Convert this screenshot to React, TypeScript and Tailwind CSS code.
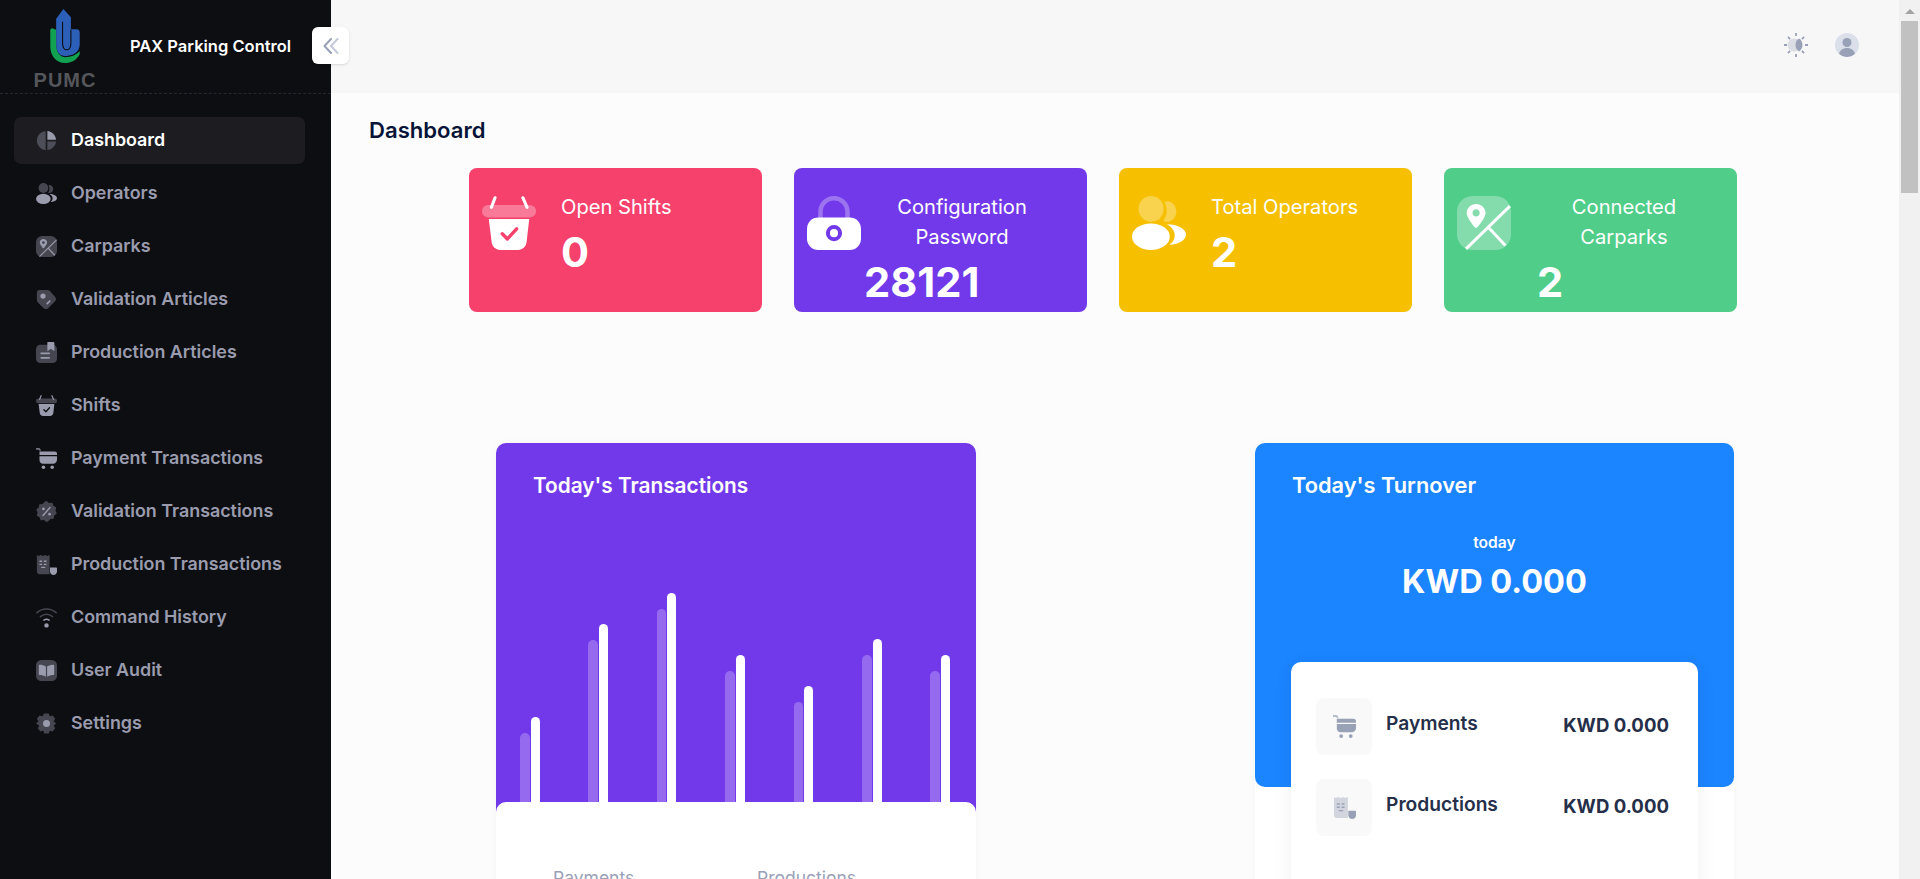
import type { ReactNode } from 'react';

type IconProps = { className?: string; duo?: number; cut?: string };

// duotone icons: currentColor for the main part, faded currentColor for the rest
const Svg = ({ className, children }: { className?: string; children: ReactNode }) => (
  <svg viewBox="0 0 24 24" fill="currentColor" className={className}>
    {children}
  </svg>
);

const PieIcon = ({ className, duo = 0.4 }: IconProps) => (
  <Svg className={className}>
    <path opacity={duo} d="M11 1.500C5.400 1.800 1 6.400 1 12c0 5.700 4.400 10.500 10 11V1.500z" />
    <path d="M13 1.200C18.300 1.700 22.400 5.800 22.900 11H13V1.200z" />
    <path opacity={duo} d="M13 13h9.900c-.5 5.100-4.700 9.300-9.900 9.900V13z" />
  </Svg>
);

const UsersIcon = ({ className, duo = 0.4 }: IconProps) => (
  <Svg className={className}>
    <ellipse opacity={duo} cx="8.500" cy="5.700" rx="5.600" ry="5.700" />
    <path opacity={duo} d="M15.500 2.300c2.300 0 4.200 2.100 4.200 4.600s-1.900 4.600-4.200 4.600c-.6 0-1.100-.1-1.600-.4 1-1.400 1.500-3 1.500-4.500 0-1.500-.4-2.900-1.100-4 .6-.2 1.300-.3 2.200-.3z" />
    <ellipse cx="8.400" cy="18.100" rx="8.400" ry="5.900" />
    <path d="M15.500 12.500c4.600 0 8.500 1.900 8.500 4.600 0 2.400-3 4.400-7.300 4.600 1.500-1.200 2.300-2.700 2.300-4.300 0-1.900-1.300-3.700-3.500-4.900z" />
  </Svg>
);

const MapIcon = ({ className, duo = 0.4 }: IconProps) => (
  <Svg className={className}>
    <rect opacity={duo} width="24" height="24" rx="7" />
    <path d="M8.500 3.500C6.300 3.500 4.300 5.200 4.300 7.500c0 1.700 2.700 5.400 3.600 6.400.3.300.9.300 1.100 0C10 12.900 12.700 9.200 12.700 7.500 12.700 5.200 10.700 3.500 8.500 3.500zm0 5.600c-.9 0-1.600-.7-1.600-1.600s.7-1.600 1.600-1.600 1.600.7 1.600 1.600-.7 1.600-1.600 1.600z" />
    <path stroke="currentColor" strokeWidth="1.300" fill="none" d="M23.500 4.500 4 23.500M14 14l7.500 8" />
  </Svg>
);

const TagIcon = ({ className, duo = 0.4 }: IconProps) => (
  <Svg className={className}>
    <path opacity={duo} d="M4 1h9c1 0 1.900.4 2.600 1.100l6.300 7c1.300 1.400 1.300 3.600-.1 5l-7.900 7.800c-1.400 1.400-3.700 1.400-5.100 0l-6.900-6.700C1.400 14.500 1 13.600 1 12.600V4c0-1.700 1.300-3 3-3z" />
    <circle cx="8" cy="8" r="3" />
    <path d="M11.500 16.500l4-4 1.400 1.400-4 4z" />
  </Svg>
);

const DocIcon = ({ className, duo = 0.4 }: IconProps) => (
  <Svg className={className}>
    <rect opacity={duo} y="3" width="24" height="21" rx="5" />
    <path d="M13 0h7c.6 0 1 .4 1 1v9.500l-4-2.700-4 2.700V0z" />
    <rect x="5" y="12" width="11" height="2" rx="1" />
    <rect x="5" y="17" width="11" height="2" rx="1" />
  </Svg>
);

const BasketIcon = ({ className, duo = 0.4, cut = '#0d0e12' }: IconProps) => (
  <Svg className={className}>
    <rect opacity={duo} y="4" width="24" height="5.500" rx="2.700" />
    <path d="M3 10.200h18l-1.200 10.400c-.2 1.900-1.800 3.400-3.700 3.400H8c-1.900 0-3.500-1.500-3.700-3.400L3 10.200z" />
    <path d="M5.800 .8 4.200 5M18.200.8 20 5" stroke="currentColor" strokeWidth="1.400" strokeLinecap="round" fill="none" />
    <path d="M9 16.800l2.300 2.300 4.100-4.500" stroke={cut} strokeWidth="1.500" strokeLinecap="round" strokeLinejoin="round" fill="none" />
  </Svg>
);

const CartIcon = ({ className, duo = 0.4 }: IconProps) => (
  <Svg className={className}>
    <path d="M0 0h3c.9 0 1.700.5 2.100 1.300L5.800 3H4L3.400 2H0V0z" opacity={duo + 0.3} />
    <path d="M4 4h17.500C23 4 24 5 24 6.500V8H4V4z" />
    <path d="M4 9.500h20v4c0 2.500-2 4.500-4.500 4.500H8c-2.200 0-4-1.800-4-4V9.500z" />
    <circle cx="8.500" cy="22" r="2" />
    <circle cx="18.500" cy="22" r="2" />
  </Svg>
);

const BadgeIcon = ({ className, duo = 0.4 }: IconProps) => (
  <Svg className={className}>
    <path opacity={duo} d="M12 0l3 2.200 3.700-.3 1.300 3.500 3.200 1.900-1 3.600 1.600 3.400-2.900 2.300-.7 3.700-3.700.3L13.800 23.500 12 24l-3-2.200-3.700.3L4 18.600.8 16.700l1-3.600L.2 9.700 3.100 7.400l.7-3.700 3.700-.3L10.200.5z" />
    <path d="M8 16.500 16 7.500" stroke="currentColor" strokeWidth="1.600" strokeLinecap="round" />
    <circle cx="8.500" cy="9" r="1.500" />
    <circle cx="15.500" cy="15" r="1.500" />
  </Svg>
);

const ReceiptIcon = ({ className, duo = 0.4 }: IconProps) => (
  <Svg className={className}>
    <path opacity={duo} d="M1 1l2 1.200L5.500 1 8 2.200 10.500 1 13 2.200 15.500 1v22H4c-1.700 0-3-1.300-3-3V1z" />
    <path d="M4 7.500h3v1.500H4zM9 7.500h3v1.500H9zM4 11h3v1.500H4zM9 11h3v1.500H9zM6 14.500h4.500V16H6z" />
    <path d="M16 15.500h7c.5 0 1 .5 1 1v3.500c0 2.200-1.800 4-4 4s-4-1.800-4-4v-4.500z" />
  </Svg>
);

const WifiIcon = ({ className, duo = 0.4 }: IconProps) => (
  <svg viewBox="0 0 24 24" fill="none" stroke="currentColor" strokeWidth="1.700" strokeLinecap="round" className={className}>
    <path opacity={duo} d="M1 6.500C7.500 1 16.500 1 23 6.500" />
    <path opacity={duo} d="M5 11c4.500-3.500 9.500-3.500 14 0" />
    <path d="M9 15c2-1.300 4-1.300 6 0" />
    <circle cx="12" cy="21" r="1.700" fill="currentColor" />
  </svg>
);

const BookIcon = ({ className, duo = 0.4 }: IconProps) => (
  <Svg className={className}>
    <rect opacity={duo} width="24" height="24" rx="6" />
    <path d="M4 5.500c2.500 0 5.300.6 7.300 2v11.500c-2-1.200-4.800-1.800-7.300-1.800-.6 0-.8-.3-.8-.8V6.300c0-.5.3-.8.800-.8z" />
    <path d="M20 5.500c-2.500 0-5.300.6-7.300 2v11.500c2-1.200 4.800-1.800 7.300-1.800.6 0 .8-.3.8-.8V6.300c0-.5-.3-.8-.8-.8z" />
  </Svg>
);

const GearIcon = ({ className, duo = 0.4 }: IconProps) => (
  <Svg className={className}>
    <path opacity={duo} d="M9.500.5h5l1.300 3.200 3.200-.9 3 3.800-1.800 2.900 2.800 2.500-2.800 2.500 1.800 2.900-3 3.800-3.200-.9-1.300 3.200h-5l-1.300-3.200-3.200.9-3-3.800 1.800-2.900L0 12l2.800-2.500L1 6.600l3-3.800 3.200.9z" />
    <circle cx="12" cy="12" r="4" />
  </Svg>
);

const LockIcon = ({ className, duo = 0.3, cut = '#7239ea' }: IconProps) => (
  <Svg className={className}>
    <path opacity={duo} d="M5 10V7c0-3.900 3.100-7 7-7s7 3.100 7 7v3h-2V7c0-2.800-2.200-5-5-5S7 4.200 7 7v3H5z" />
    <rect y="9.500" width="24" height="14.500" rx="5" />
    <circle cx="12" cy="16.500" r="2.700" fill="none" stroke={cut} strokeWidth="1.800" />
  </Svg>
);

const SunIcon = ({ className }: { className?: string }) => (
  <svg viewBox="0 0 24 24" fill="currentColor" className={className}>
    <path d="M11.100 0h1.800v3h-1.800zM11.100 21h1.800v3h-1.800zM0 11.100h3v1.800H0zM21 11.100h3v1.800h-3zM3.300 4.600l1.300-1.300 2.100 2.100-1.300 1.300zM17.300 18.600l1.300-1.300 2.100 2.100-1.300 1.300zM18.600 6.700l-1.300-1.300 2.100-2.100 1.300 1.300zM4.600 20.700l-1.300-1.300 2.100-2.100 1.300 1.300z" />
    <circle cx="10" cy="12" r="6.500" opacity="0.3" />
    <path d="M15 5.600c2.100 1.200 3.500 3.600 3.500 6.400s-1.400 5.200-3.500 6.400c-2.100-1.200-3.500-3.600-3.500-6.400s1.400-5.200 3.500-6.400z" />
  </svg>
);

const Logo = () => (
  <svg viewBox="0 0 31 56" className="w-[31px] h-[55px]">
    <path fill="#12a150" d="M0 21.500Q0 19.500 2 19.500L6 21V36C6 44 10 49 15 49 21 49 26 47 30 43V46C27 52 21 55 15 55 6 55 0 48 0 38Z" />
    <path fill="#2c5fb8" d="M6 10 13.300 0 21 8.500V20.500H26.500Q30 20.500 30 24V36C30 44 23 48 15 48 10 48 6 44 6 36Z" />
    <path fill="none" stroke="#0d0e12" strokeWidth="1.100" d="M12.500 13V34C12.500 39 14 41.500 16.800 41.500 19.500 41.500 21 39 21 34V21" />
  </svg>
);

const menu = [
  { label: 'Dashboard', Icon: PieIcon, active: true },
  { label: 'Operators', Icon: UsersIcon },
  { label: 'Carparks', Icon: MapIcon },
  { label: 'Validation Articles', Icon: TagIcon },
  { label: 'Production Articles', Icon: DocIcon },
  { label: 'Shifts', Icon: BasketIcon },
  { label: 'Payment Transactions', Icon: CartIcon },
  { label: 'Validation Transactions', Icon: BadgeIcon },
  { label: 'Production Transactions', Icon: ReceiptIcon },
  { label: 'Command History', Icon: WifiIcon },
  { label: 'User Audit', Icon: BookIcon },
  { label: 'Settings', Icon: GearIcon },
];

// white is the taller bar, the faded one sits just left of it
const bars = [85, 178, 209, 147, 116, 163, 147];

const Sidebar = () => (
  <aside className="relative w-[331px] shrink-0 bg-[#0d0e12]">
    <div className="flex items-center h-[94px] border-b border-dashed border-[#26272f] pl-[35px]">
      <div className="flex flex-col items-center w-[60px] mt-[4px]">
        <Logo />
        <span className="mt-[8px] text-[20px] leading-[16px] font-bold tracking-[1px] text-[#55565b] font-['Liberation_Sans',sans-serif]">
          PUMC
        </span>
      </div>
      <span className="ml-[35px] text-[16.500px] font-semibold text-white">PAX Parking Control</span>
    </div>

    <button className="absolute top-[27px] -right-[18px] z-10 flex justify-center items-center w-[37px] h-[37px] bg-white rounded-md shadow-sm">
      <svg viewBox="0 0 16 16" fill="none" strokeWidth="2" strokeLinecap="round" strokeLinejoin="round" className="w-[16px] h-[16px]">
        <path d="M8 1 1.500 8 8 15" stroke="#99a1b7" />
        <path d="M14.500 1 8 8l6.500 7" stroke="#c4cada" />
      </svg>
    </button>

    <nav className="flex flex-col gap-[6px] ml-[14px] mr-[26px] mt-[23px]">
      {menu.map(({ label, Icon, active }) => (
        <a
          key={label}
          className={
            active
              ? 'flex items-center gap-[14px] h-[47px] pl-[22px] rounded-[7px] bg-[#1c1c21] text-white'
              : 'flex items-center gap-[14px] h-[47px] pl-[22px] rounded-[7px] text-[#9a9cae]'
          }
        >
          <Icon className={active ? 'w-[21px] h-[21px] text-[#9a9cae]' : 'w-[21px] h-[21px]'} />
          <span className="text-[17.875px] font-semibold whitespace-nowrap">{label}</span>
        </a>
      ))}
    </nav>
  </aside>
);

const StatCard = ({
  bg,
  icon,
  title,
  value,
  colClass,
}: {
  bg: string;
  icon: ReactNode;
  title: ReactNode;
  value: string;
  colClass: string;
}) => (
  <div className={`flex w-[293px] h-[144px] px-[13px] pt-[24px] rounded-[8px] text-white ${bg}`}>
    <div className="mt-[4px] shrink-0">{icon}</div>
    <div className={colClass}>
      <div className="text-[20.150px] leading-[30px]">{title}</div>
      <div className="text-[41.600px] leading-[60px] font-bold text-left">{value}</div>
    </div>
  </div>
);

const TurnoverRow = ({ icon, label }: { icon: ReactNode; label: string }) => (
  <div className="flex items-center h-[57px]">
    <div className="flex justify-center items-center w-[56px] h-[57px] rounded-[8px] bg-[#f9f9f9]">{icon}</div>
    <span className="ml-[14px] -mt-[6px] text-[19.200px] font-semibold text-[#252f4a]">{label}</span>
    <span className="ml-auto -mt-[2px] text-[18.600px] font-bold text-[#252f4a]">KWD 0.000</span>
  </div>
);

const App = () => {
  return (
    <div className="flex h-[879px] overflow-hidden bg-[#fcfcfc] font-['Inter',sans-serif]">
      <Sidebar />

      <main className="flex-1 min-w-0">
        <header className="flex justify-end items-center gap-[27px] h-[93px] pr-[40px] pb-[4px] bg-[#f7f7f7]">
          <SunIcon className="w-[24px] h-[24px] text-[#99a1b7]" />
          <div className="flex justify-center items-end w-[24px] h-[24px] rounded-full overflow-hidden bg-[#dbdfe9]">
            <svg viewBox="0 0 24 24" fill="#99a1b7" className="w-[24px] h-[24px]">
              <circle cx="12" cy="9.500" r="4.500" />
              <path d="M4 21c1-4 4-6 8-6s7 2 8 6c-2 2-5 3-8 3s-6-1-8-3z" />
            </svg>
          </div>
        </header>

        <h1 className="ml-[38px] mt-[22px] text-[22.100px] leading-[30px] font-semibold text-[#071437]">Dashboard</h1>

        <div className="flex gap-[32px] ml-[138px] mt-[23px]">
          <StatCard
            bg="bg-[#f6416c]"
            icon={<BasketIcon className="w-[54px] h-[54px]" duo={0.3} cut="#f6416c" />}
            title="Open Shifts"
            value="0"
            colClass="ml-[25px]"
          />
          <StatCard
            bg="bg-[#7239ea]"
            icon={<LockIcon className="w-[54px] h-[54px]" />}
            title={<>Configuration<br />Password</>}
            value="28121"
            colClass="ml-[3px] w-[196px] text-center"
          />
          <StatCard
            bg="bg-[#f6c000]"
            icon={<UsersIcon className="w-[54px] h-[54px]" duo={0.3} />}
            title="Total Operators"
            value="2"
            colClass="ml-[25px]"
          />
          <StatCard
            bg="bg-[#50cd89]"
            icon={<MapIcon className="w-[54px] h-[54px]" duo={0.3} />}
            title={<>Connected<br />Carparks</>}
            value="2"
            colClass="ml-[26px] w-[174px] text-center"
          />
        </div>

        <div className="flex gap-[279px] ml-[165px] mt-[131px]">
          {/* Today's Transactions */}
          <section className="w-[480px] h-[600px] rounded-[10px] overflow-hidden bg-white shadow-[0_0_10px_rgba(0,0,0,0.03)]">
            <div className="flex flex-col h-[369px] pb-[10px] bg-[#7239ea]">
              <h2 className="px-[37px] pt-[28px] text-[20.800px] leading-[30px] font-semibold text-white">Today's Transactions</h2>
              <div className="flex flex-1 justify-between items-end pl-[24px] pr-[26px]">
                {bars.map((h, i) => (
                  <div key={i} className="flex items-end gap-[1px]">
                    <div className="w-[9.500px] rounded-t-[5px] bg-white/25" style={{ height: h - 16 }} />
                    <div className="w-[9px] rounded-t-[5px] bg-white" style={{ height: h }} />
                  </div>
                ))}
              </div>
            </div>
            <div className="relative flex -mt-[10px] pt-[66px] pl-[57px] rounded-t-[10px] bg-white text-[17.500px] leading-[20px] text-[#99a1b7]">
              <span className="w-[204px]">Payments</span>
              <span>Productions</span>
            </div>
          </section>

          {/* Today's Turnover */}
          <section className="w-[479px] h-[600px] rounded-[10px] bg-white shadow-[0_0_10px_rgba(0,0,0,0.03)]">
            <div className="h-[344px] rounded-[10px] bg-[#1b84ff] text-white">
              <h2 className="px-[37px] pt-[27px] text-[21.800px] leading-[30px] font-semibold">Today's Turnover</h2>
              <div className="mt-[33px] text-center text-[15.600px] leading-[20px] font-semibold">today</div>
              <div className="mt-[5px] text-center text-[32.500px] leading-[48px] font-bold">KWD 0.000</div>
            </div>
            <div className="flex flex-col gap-[24px] -mt-[125px] ml-[36px] w-[407px] h-[300px] relative pl-[25px] pr-[29px] pt-[36px] rounded-[10px] bg-white shadow-[0_4px_20px_rgba(0,0,0,0.06)]">
              <TurnoverRow icon={<CartIcon className="w-[23px] h-[23px] text-[#99a1b7]" />} label="Payments" />
              <TurnoverRow icon={<ReceiptIcon className="w-[23px] h-[23px] text-[#99a1b7]" />} label="Productions" />
            </div>
          </section>
        </div>
      </main>

      {/* page scrollbar */}
      <div className="flex flex-col items-center w-[21px] shrink-0 bg-[#f1f1f1]">
        <svg viewBox="0 0 10 5" fill="#a3a3a3" className="w-[10px] h-[5px] mt-[9px] mb-[7px]">
          <path d="M5 0l5 5H0z" />
        </svg>
        <div className="w-[17px] h-[172px] bg-[#c1c1c1]" />
      </div>
    </div>
  );
};

export default App;
